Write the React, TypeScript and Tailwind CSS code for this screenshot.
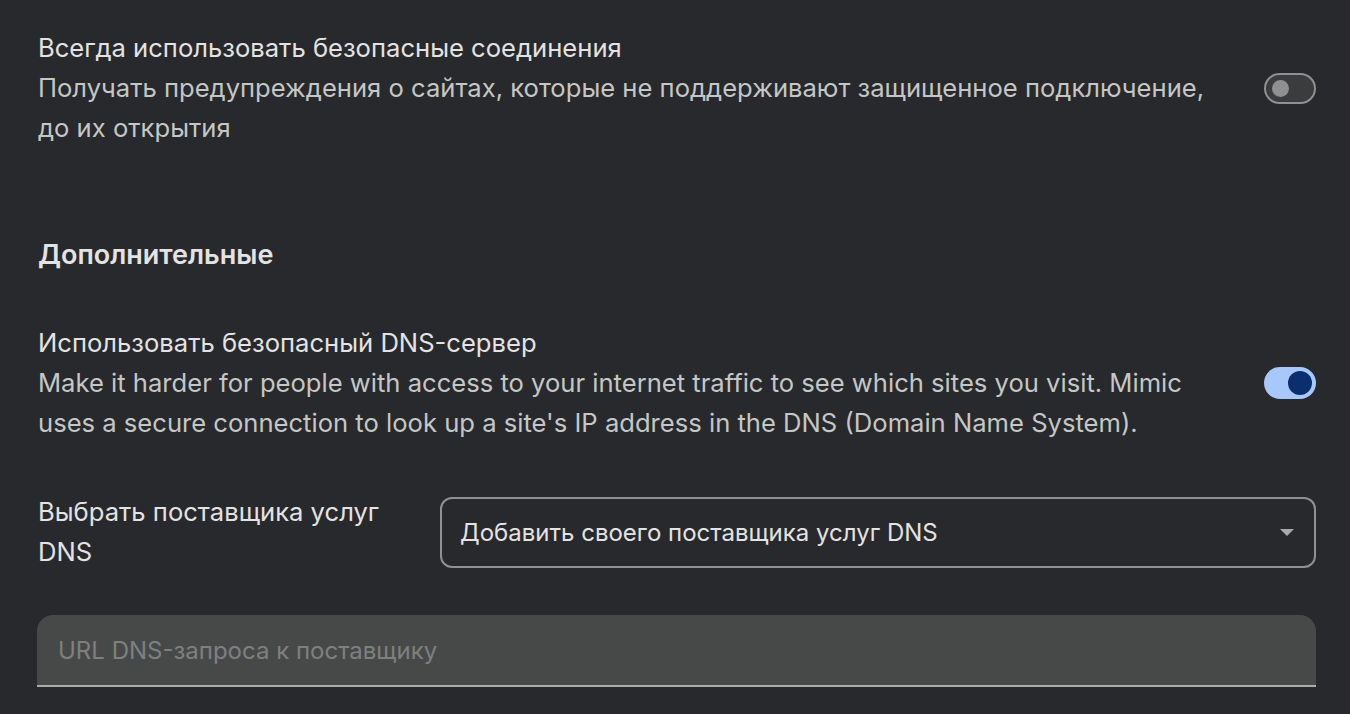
import React from "react";

const Toggle = ({ on }: { on: boolean }) =>
  on ? (
    <div className="w-[52px] h-[32px] rounded-full bg-[#a8c7fa] flex items-center justify-end pr-[4px] shrink-0">
      <div className="w-[24px] h-[24px] rounded-full bg-[#0a2e6e]" />
    </div>
  ) : (
    <div className="w-[52px] h-[31px] rounded-full border-2 border-[#8e918f] bg-[#3b3c3e] flex items-center pl-[6px] shrink-0">
      <div className="w-[17px] h-[17px] rounded-full bg-[#8e918f]" />
    </div>
  );

const App = () => {
  return (
    <div
      className="w-[1350px] h-[714px] overflow-hidden bg-[#28292c] text-[25.6px] leading-[40px] text-[#e3e3e3]"
      style={{ fontFamily: "Inter, 'Noto Sans', sans-serif" }}
    >
      <div className="pl-[38px] pr-[34px] pt-[28px]">
        {/* Always use secure connections */}
        <div className="flex items-center justify-between">
          <div>
            <div className="text-[#e3e3e3]">Всегда использовать безопасные соединения</div>
            <div className="text-[#c4c7c5]">
              Получать предупреждения о сайтах, которые не поддерживают защищенное подключение,
              <br />
              до их открытия
            </div>
          </div>
          <Toggle on={false} />
        </div>

        {/* Advanced */}
        <div className="mt-[87px] text-[27px] font-semibold text-[#e3e3e3]">Дополнительные</div>

        <div className="mt-[48px] flex items-center justify-between">
          <div>
            <div>Использовать безопасный DNS-сервер</div>
            <div className="text-[#c4c7c5]">
              Make it harder for people with access to your internet traffic to see which sites you visit. Mimic
              <br />
              uses a secure connection to look up a site's IP address in the DNS (Domain Name System).
            </div>
          </div>
          <Toggle on={true} />
        </div>

        <div className="mt-[49px] flex items-center">
          <div className="w-[402px] shrink-0">
            Выбрать поставщика услуг
            <br />
            DNS
          </div>
          <div className="flex-1 h-[71px] rounded-[12px] border-2 border-[#8e918f] flex items-center justify-between pl-[18px] pr-[20px] pt-[2px] text-[24px]">
            <span>Добавить своего поставщика услуг DNS</span>
            <svg width="14" height="8" viewBox="0 0 14 8">
              <path d="M0 0 L14 0 L7 7 Z" fill="#a8abaa" />
            </svg>
          </div>
        </div>

        <div className="mt-[43px] h-[72px] rounded-t-[16px] bg-[#474948] border-b-2 border-[#a9acaa] flex items-center pl-[21px] pt-[2px] text-[24px] text-[#7e8080] -ml-[1px]">
          URL DNS-запроса к поставщику
        </div>
      </div>
    </div>
  );
};

export default App;
